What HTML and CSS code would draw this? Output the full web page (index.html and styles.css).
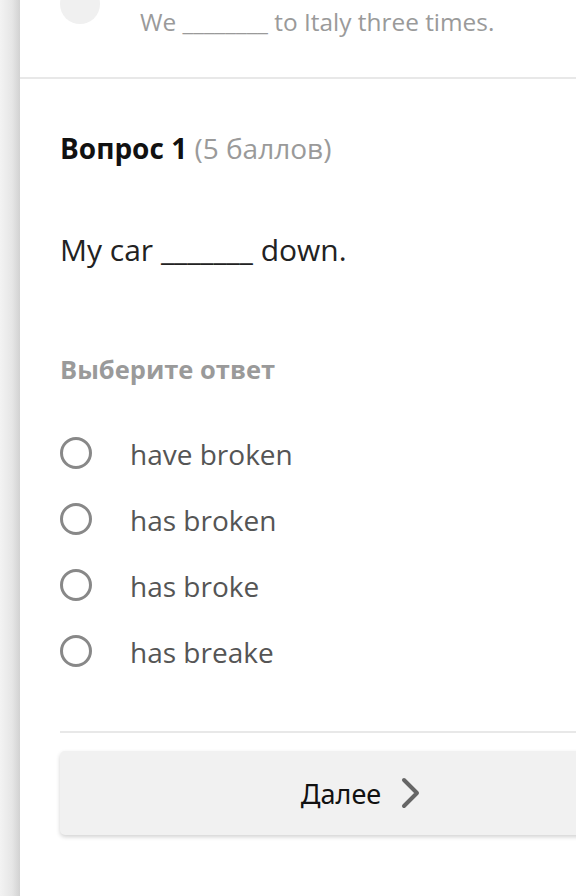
FILE: index.html
```
<!DOCTYPE html>
<html lang="ru">
<head>
    <meta charset="UTF-8">
    <meta name="viewport" content="width=device-width, initial-scale=1.0">
    <title>Тест</title>
    <link rel="stylesheet" href="styles.css">
</head>
<body>
    <div class="rail"></div>
    <div class="panel">
        <div class="prev">
            <div class="prev-row">
                <span class="prev-dot"></span>
                <span class="prev-text">We ________ to Italy three times.</span>
            </div>
        </div>

        <div class="question">
            <h2 class="q-title">Вопрос 1 <span class="q-points">(5 баллов)</span></h2>
            <p class="q-text">My car _______ down.</p>
            <div class="q-hint">Выберите ответ</div>

            <ul class="options">
                <li class="option"><span class="radio"></span>have broken</li>
                <li class="option"><span class="radio"></span>has broken</li>
                <li class="option"><span class="radio"></span>has broke</li>
                <li class="option"><span class="radio"></span>has breake</li>
            </ul>

            <div class="divider"></div>

            <button class="next">
                Далее
                <svg class="chevron" width="20" height="32" viewBox="0 0 20 32">
                    <path d="M3 3 L16 16 L3 29" fill="none" stroke="#666" stroke-width="4" stroke-linecap="round" stroke-linejoin="round"/>
                </svg>
            </button>
        </div>
    </div>
</body>
</html>
```

FILE: styles.css
```
html, body {
    margin: 0;
    height: 100%;
    overflow: hidden;
}

body {
    display: flex;
    font-family: "Open Sans", "Noto Sans", sans-serif;
    background-color: #fff;
}

.rail {
    flex: none;
    width: 20px;
    background: linear-gradient(to right, #f3f3f3 0%, #e6e6e6 60%, #d2d2d2 100%);
}

.panel {
    flex: none;
    width: 642px;
    background-color: #fff;
}

.prev {
    height: 77px;
    border-bottom: 2px solid #e8e8e8;
}

.prev-row {
    display: flex;
    align-items: flex-start;
    gap: 40px;
    padding-left: 40px;
}

.prev-dot {
    width: 40px;
    height: 40px;
    margin-top: -16px;
    border-radius: 50%;
    background-color: #f0f0f0;
}

.prev-text {
    margin-top: 7px;
    font-size: 24.4px;
    line-height: 30px;
    color: #9a9a9a;
}

.question {
    padding: 51px 0 0 40px;
}

.q-title {
    margin: 0;
    font-size: 28px;
    line-height: 36px;
    font-weight: 700;
    color: #111;
}

.q-points {
    font-weight: 400;
    color: #9a9a9a;
}

.q-text {
    margin: 64px 0 0;
    font-size: 30px;
    line-height: 40px;
    color: #222;
}

.q-hint {
    margin-top: 82px;
    font-size: 25.5px;
    line-height: 34px;
    font-weight: 700;
    color: #9a9a9a;
}

.options {
    list-style: none;
    margin: 34px 0 0;
    padding: 0;
}

.option {
    display: flex;
    align-items: center;
    gap: 38px;
    height: 66px;
    padding-top: 2px;
    box-sizing: border-box;
    font-size: 28px;
    color: #555;
}

.radio {
    flex: none;
    width: 26px;
    height: 26px;
    margin-top: -2px;
    border: 3px solid #888;
    border-radius: 50%;
}

.divider {
    margin-top: 47px;
    height: 2px;
    background-color: #e8e8e8;
}

.next {
    display: flex;
    align-items: center;
    justify-content: center;
    gap: 20px;
    width: 100%;
    height: 84px;
    margin-top: 18px;
    border: none;
    border-radius: 5px;
    background-color: #f1f1f1;
    box-shadow: 0 2px 4px rgba(0, 0, 0, 0.18);
    font-family: "Noto Sans", "Open Sans", sans-serif;
    font-size: 27px;
    color: #111;
    cursor: pointer;
}

.chevron {
    display: block;
}
```
